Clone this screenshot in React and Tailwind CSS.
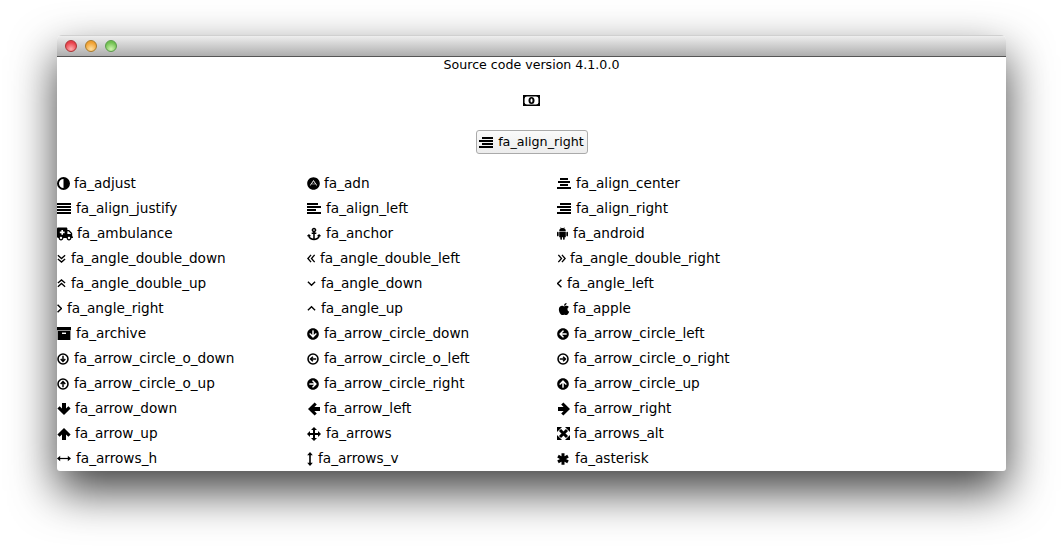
import React from "react";
import {
  FaAdn, FaAmbulance, FaAnchor, FaApple, FaArrowCircleDown, FaArrowCircleLeft, FaArrowCircleRight, FaArrowCircleUp,
} from "react-icons/fa";

function Bars({ rows }) {
  return (
    <svg viewBox="0 0 14 11" className="w-[14px] h-[11px]" fill="currentColor">
      {rows.map(([x, w], i) => (
        <rect key={i} x={x} y={i * 3} width={w} height="2" />
      ))}
    </svg>
  );
}
const AlignRight = () => <Bars rows={[[3, 11], [0, 14], [3, 11], [0, 14]]} />;
const AlignLeft = () => <Bars rows={[[0, 11], [0, 14], [0, 9], [0, 14]]} />;
const AlignCenter = () => <Bars rows={[[3, 8], [1, 12], [3, 8], [0, 14]]} />;
const AlignJustify = () => <Bars rows={[[0, 14], [0, 14], [0, 14], [0, 14]]} />;

const Adjust = () => (
  <svg viewBox="0 0 13 13" className="size-[13px]">
    <circle cx="6.5" cy="6.5" r="5.5" fill="none" stroke="currentColor" strokeWidth="2" />
    <path d="M6.5 1a5.5 5.5 0 0 1 0 11z" fill="currentColor" />
  </svg>
);

const Archive = () => (
  <svg viewBox="0 0 14 13" className="w-[14px] h-[13px]" fill="currentColor">
    <rect x="0" y="0" width="14" height="3.4" />
    <path d="M0.6 4h12.8v9H0.6z" />
    <rect x="5" y="5.6" width="4" height="1.4" fill="#fff" />
  </svg>
);

const Android = () => (
  <svg viewBox="0 0 12 14" className="w-[11px] h-[13px]" fill="currentColor">
    <path d="M2.4 4.6a3.6 3.6 0 0 1 7.2 0z" />
    <path d="M4 0.4l1 1.6M8 0.4l-1 1.6" stroke="currentColor" strokeWidth="0.7" />
    <rect x="2.4" y="5.2" width="7.2" height="6" rx="0.6" />
    <rect x="0" y="5.2" width="1.8" height="5" rx="0.9" />
    <rect x="10.2" y="5.2" width="1.8" height="5" rx="0.9" />
    <rect x="3.6" y="10" width="1.8" height="4" rx="0.9" />
    <rect x="6.6" y="10" width="1.8" height="4" rx="0.9" />
  </svg>
);

function Chev({ double, rot = 0 }) {
  return (
    <svg viewBox="0 0 10 10" className="size-[9px]" fill="none" stroke="currentColor" strokeWidth="1.5">
      <g transform={`rotate(${rot} 5 5)`}>
        {double ? (
          <>
            <polyline points="1,1.5 5,5 9,1.5" />
            <polyline points="1,5.5 5,9 9,5.5" />
          </>
        ) : (
          <polyline points="1,3 5,7 9,3" />
        )}
      </g>
    </svg>
  );
}

function ChevSide({ rot }) {
  return (
    <svg viewBox="2.4 0.5 5.2 9" className="w-[5px] h-[9px]" fill="none" stroke="currentColor" strokeWidth="1.5">
      <g transform={`rotate(${rot} 5 5)`}>
        <polyline points="1,3 5,7 9,3" />
      </g>
    </svg>
  );
}

function Arrow({ rot = 0 }) {
  return (
    <svg viewBox="0 0 14 14" className="size-[14px]" fill="currentColor">
      <polygon
        transform={`rotate(${rot} 7 7)`}
        points="5,1 9,1 9,6.6 11.4,4.2 13.6,6.4 7,13 0.4,6.4 2.6,4.2 5,6.6"
      />
    </svg>
  );
}

function CircleO({ rot = 0 }) {
  return (
    <svg viewBox="0 0 13 13" className="size-[12px]" fill="none" stroke="currentColor">
      <circle cx="6.5" cy="6.5" r="5.4" strokeWidth="1.7" />
      <g transform={`rotate(${rot} 6.5 6.5)`} strokeWidth="1.6">
        <path d="M6.5 3v6M4 6.6l2.5 2.6 2.5-2.6" />
      </g>
    </svg>
  );
}

const Move = () => (
  <svg viewBox="0 0 14 14" className="size-[14px]" fill="currentColor">
    <rect x="2" y="6" width="10" height="2" />
    <rect x="6" y="2" width="2" height="10" />
    <polygon points="7,0 10,3 4,3" />
    <polygon points="7,14 10,11 4,11" />
    <polygon points="0,7 3,4 3,10" />
    <polygon points="14,7 11,4 11,10" />
  </svg>
);

const ArrowsAlt = () => (
  <svg viewBox="0 0 13 13" className="size-[13px]" fill="currentColor">
    <path d="M3 3l7 7M10 3l-7 7" stroke="currentColor" strokeWidth="3" />
    <polygon points="0,0 5,0 0,5" />
    <polygon points="13,0 8,0 13,5" />
    <polygon points="0,13 5,13 0,8" />
    <polygon points="13,13 8,13 13,8" />
  </svg>
);

const ArrowsH = () => (
  <svg viewBox="0 0 14 7" className="w-[14px] h-[7px]" fill="currentColor">
    <rect x="2" y="2.9" width="10" height="1.2" />
    <polygon points="0,3.5 3.2,0.8 3.2,6.2" />
    <polygon points="14,3.5 10.8,0.8 10.8,6.2" />
  </svg>
);

const ArrowsV = () => (
  <svg viewBox="0 0 6 14" className="w-[6px] h-[14px]" fill="currentColor">
    <rect x="2.2" y="2" width="1.6" height="10" />
    <polygon points="3,0 5.8,3.2 0.2,3.2" />
    <polygon points="3,14 5.8,10.8 0.2,10.8" />
  </svg>
);

const Asterisk = () => (
  <svg viewBox="0 0 12 12" className="size-[12px]" stroke="currentColor" strokeWidth="3" fill="none">
    <path d="M6 0.2v11.6M1 3.1l10 5.8M11 3.1L1 8.9" />
  </svg>
);

const Money = () => (
  <svg viewBox="0 0 17 11" className="w-[17px] h-[11px]">
    <rect width="17" height="11" fill="#000" />
    <rect x="1.6" y="1.4" width="13.8" height="8.2" rx="2.4" fill="#fff" />
    <ellipse cx="8.5" cy="5.5" rx="3" ry="3.6" fill="#000" />
    <ellipse cx="8.5" cy="5.5" rx="1" ry="2" fill="#fff" />
  </svg>
);

const items = [
  ["fa_adjust", <Adjust />, "w-[17px]"],
  ["fa_adn", <FaAdn className="size-[13px]" />, "w-[17px]"],
  ["fa_align_center", <AlignCenter />, "w-[19px]"],
  ["fa_align_justify", <AlignJustify />, "w-[19px]"],
  ["fa_align_left", <AlignLeft />, "w-[19px]"],
  ["fa_align_right", <AlignRight />, "w-[19px]"],
  ["fa_ambulance", <FaAmbulance className="size-[16px]" />, "w-[20px]"],
  ["fa_anchor", <FaAnchor className="size-[14px]" />, "w-[19px]"],
  ["fa_android", <Android />, "w-[16px]"],
  ["fa_angle_double_down", <Chev double />, "w-[14px]"],
  ["fa_angle_double_left", <Chev double rot={90} />, "w-[13px]"],
  ["fa_angle_double_right", <Chev double rot={-90} />, "w-[13px]"],
  ["fa_angle_double_up", <Chev double rot={180} />, "w-[14px]"],
  ["fa_angle_down", <Chev />, "w-[14px]"],
  ["fa_angle_left", <ChevSide rot={90} />, "w-[10px]"],
  ["fa_angle_right", <ChevSide rot={-90} />, "w-[10px]"],
  ["fa_angle_up", <Chev rot={180} />, "w-[14px]"],
  ["fa_apple", <FaApple className="size-[14px]" />, "w-[16px]"],
  ["fa_archive", <Archive />, "w-[19px]"],
  ["fa_arrow_circle_down", <FaArrowCircleDown className="size-[12px]" />, "w-[17px]"],
  ["fa_arrow_circle_left", <FaArrowCircleLeft className="size-[12px]" />, "w-[17px]"],
  ["fa_arrow_circle_o_down", <CircleO />, "w-[17px]"],
  ["fa_arrow_circle_o_left", <CircleO rot={90} />, "w-[17px]"],
  ["fa_arrow_circle_o_right", <CircleO rot={-90} />, "w-[17px]"],
  ["fa_arrow_circle_o_up", <CircleO rot={180} />, "w-[17px]"],
  ["fa_arrow_circle_right", <FaArrowCircleRight className="size-[12px]" />, "w-[17px]"],
  ["fa_arrow_circle_up", <FaArrowCircleUp className="size-[12px]" />, "w-[17px]"],
  ["fa_arrow_down", <Arrow />, "w-[18px]"],
  ["fa_arrow_left", <Arrow rot={90} />, "w-[17px]"],
  ["fa_arrow_right", <Arrow rot={-90} />, "w-[17px]"],
  ["fa_arrow_up", <Arrow rot={180} />, "w-[18px]"],
  ["fa_arrows", <Move />, "w-[19px]"],
  ["fa_arrows_alt", <ArrowsAlt />, "w-[17px]"],
  ["fa_arrows_h", <ArrowsH />, "w-[19px]"],
  ["fa_arrows_v", <ArrowsV />, "w-[11px]"],
  ["fa_asterisk", <Asterisk />, "w-[18px]"],
];

export default function App() {
  return (
    <div className="w-[1063px] h-[550px] overflow-hidden bg-white pt-[35px] pl-[57px] text-black font-['DejaVu_Sans',sans-serif] text-[13.65px]">
      <div className="w-[949px] h-[436px] rounded-t-[5px] rounded-b-[3px] overflow-hidden flex flex-col shadow-[0_20px_46px_rgba(0,0,0,0.75)] bg-white">
        <div className="h-[22px] shrink-0 flex items-center gap-2 pl-2 bg-gradient-to-b from-[#eeeeee] to-[#aeaeae] border-t border-t-[#d0d0d0] border-b border-b-[#555]">
          <span className="size-3 rounded-full border border-[#a33] bg-[radial-gradient(circle_at_50%_80%,#ffb0b0,#e8404a_70%)]" />
          <span className="size-3 rounded-full border border-[#a87a2a] bg-[radial-gradient(circle_at_50%_80%,#ffe0a0,#f0a030_70%)]" />
          <span className="size-3 rounded-full border border-[#5a9a4a] bg-[radial-gradient(circle_at_50%_80%,#d0f5b0,#70c050_70%)]" />
        </div>
        <div className="flex-1 flex flex-col items-center">
          <div className="h-[18px] leading-[16px] w-full text-center text-[12.6px]">Source code version 4.1.0.0</div>
          <div className="mt-[20px] h-[11px] flex"><Money /></div>
          <button className="mt-[24px] h-6 w-28 flex items-center justify-center gap-[5px] rounded-[3px] border border-[#aaa] bg-gradient-to-b from-[#fafafa] to-[#ececec] text-[12.7px]">
            <AlignRight />
            fa_align_right
          </button>
          <div className="mt-[17px] w-full grid grid-cols-[250px_250px_250px] auto-rows-[25px]">
            {items.map(([name, icon, w]) => (
              <div key={name} className="flex items-center">
                <span className={`${w} shrink-0 flex items-center`}>{icon}</span>
                <span>{name}</span>
              </div>
            ))}
          </div>
        </div>
      </div>
    </div>
  );
}
